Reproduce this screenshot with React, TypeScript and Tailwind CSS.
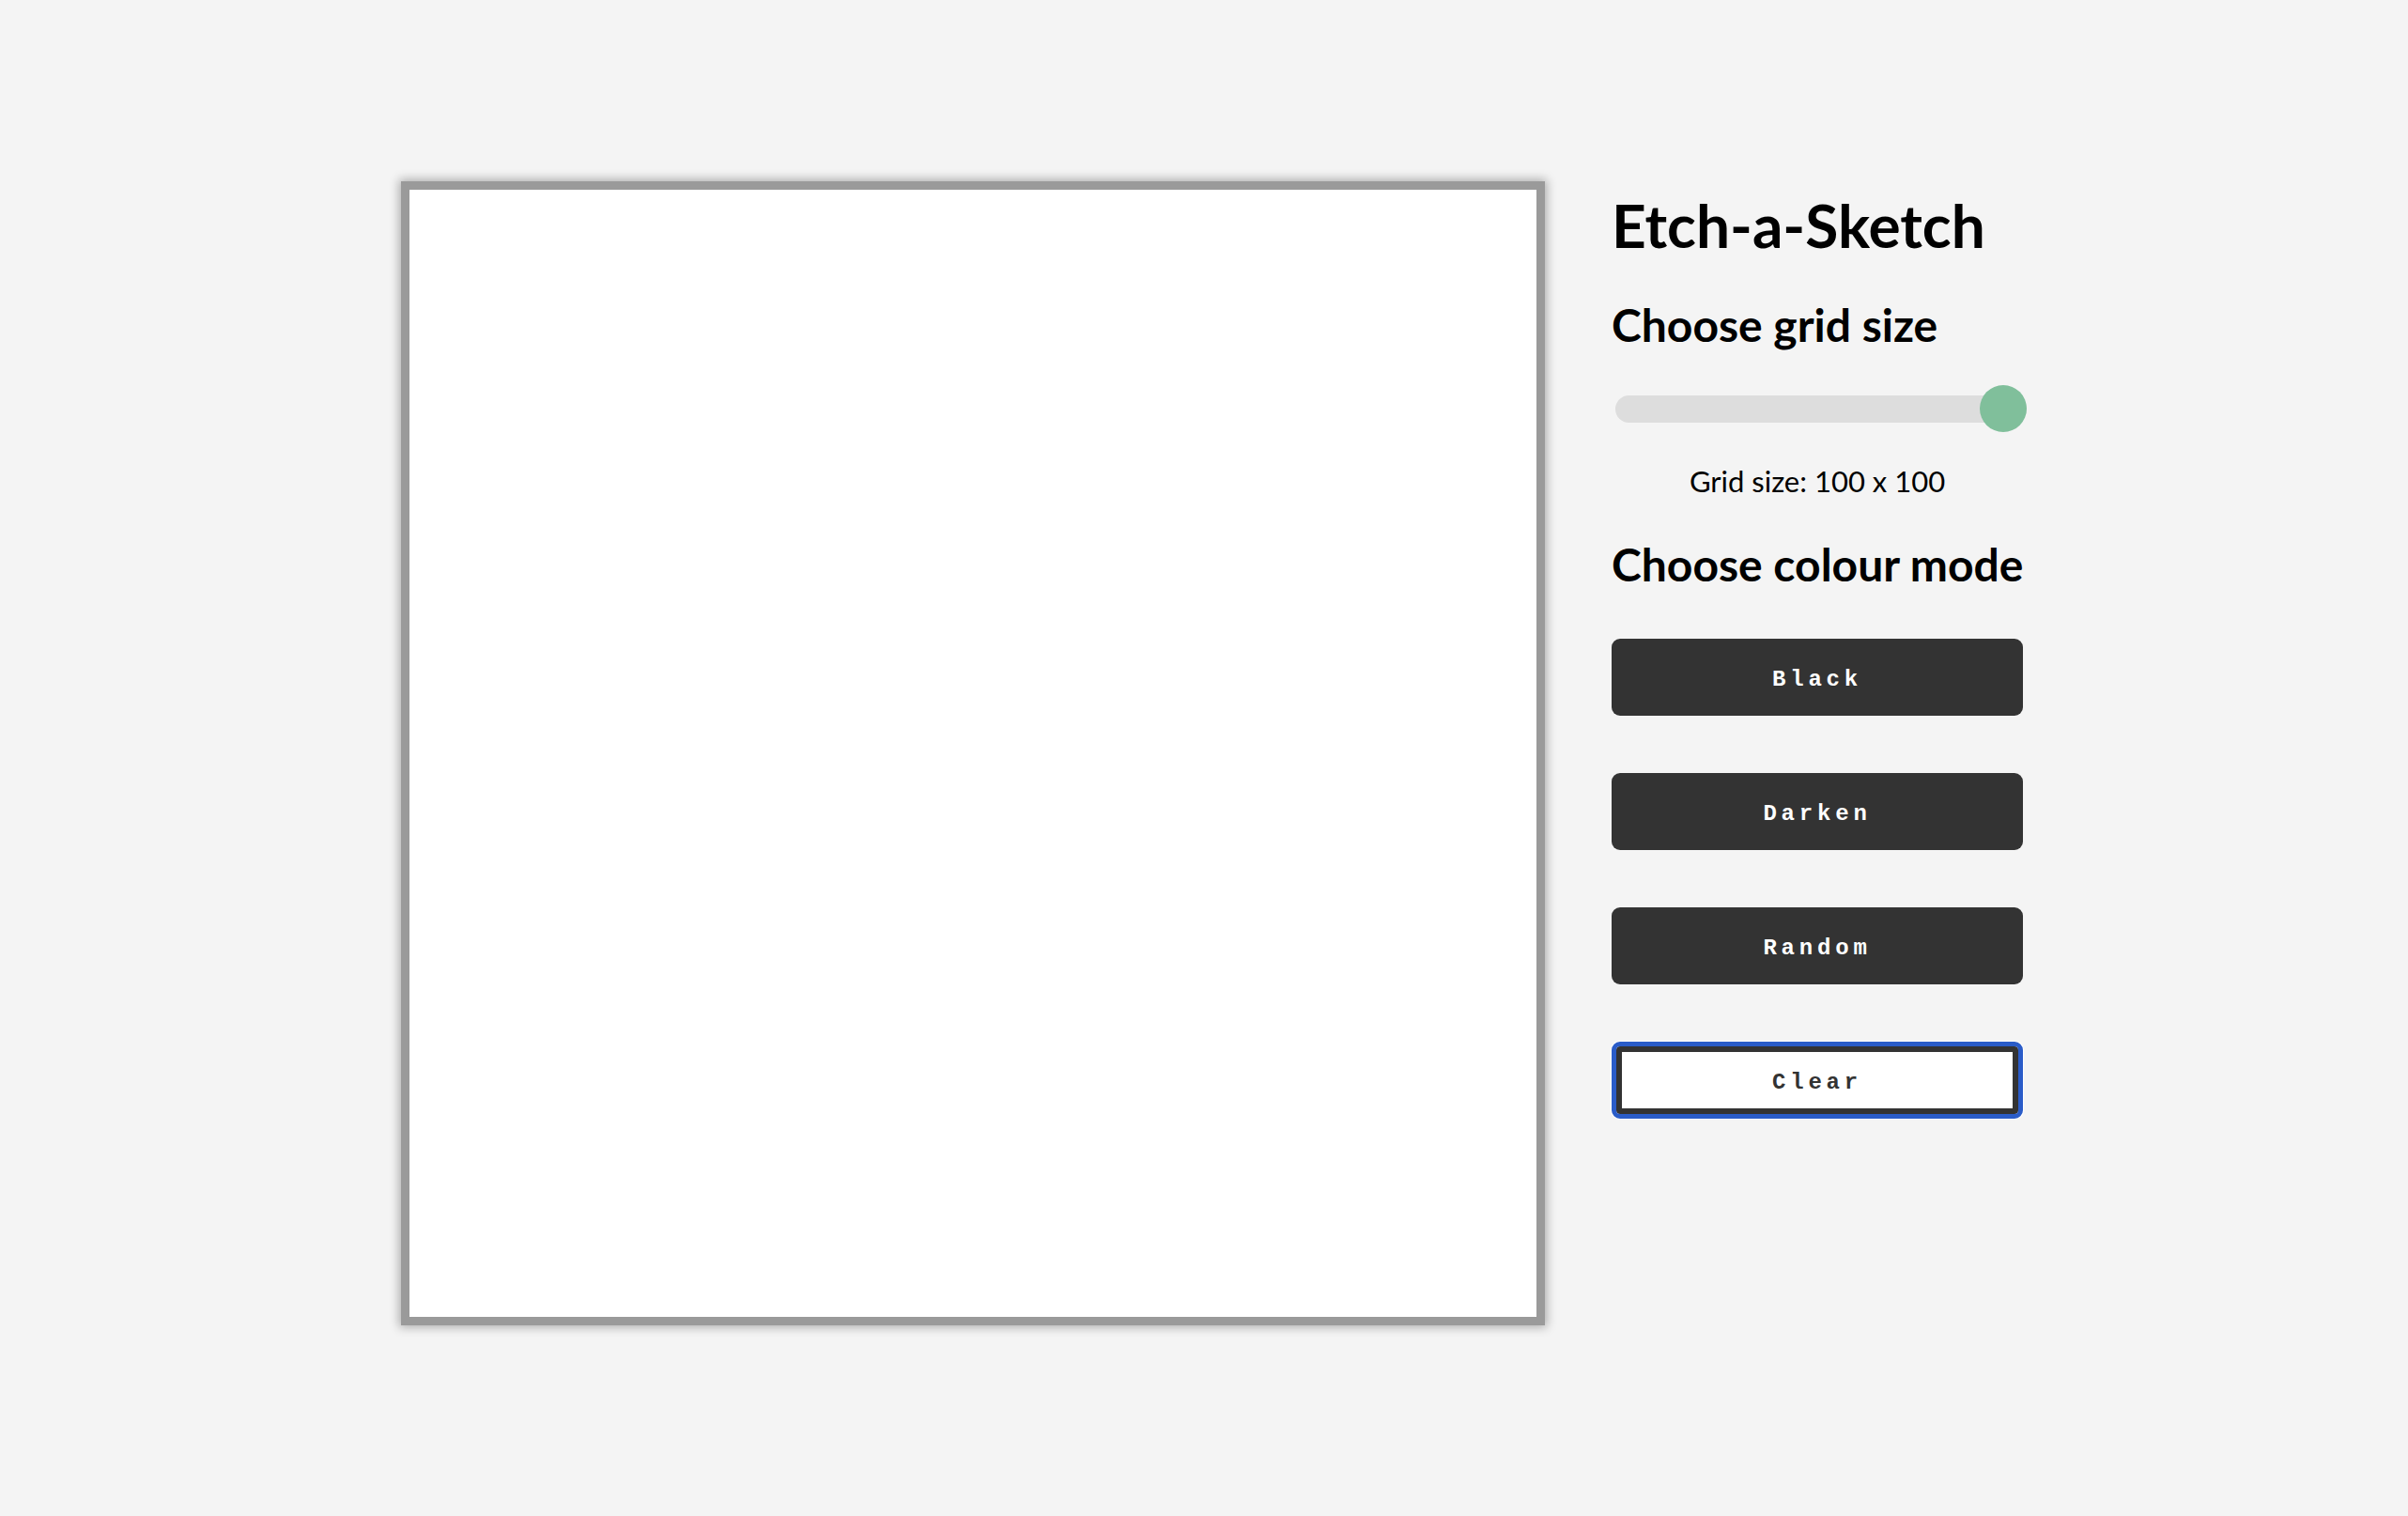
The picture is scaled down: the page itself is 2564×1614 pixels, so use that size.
const modes = ["Black", "Darken", "Random"];

export default function App() {
  return (
    <div className="min-h-screen bg-[#f4f4f4] pl-[427px] pt-[193px] font-['Lato',sans-serif] text-black">
      <div className="flex items-start gap-[71px]">
        <div className="h-[1218px] w-[1218px] border-[9px] border-[#9a9a9a] bg-white shadow-[0_0_10px_2px_rgba(0,0,0,0.3)]" />

        <div className="mt-[7px] flex w-[438px] flex-col">
          <h1 className="whitespace-nowrap text-[64px] font-bold leading-[80px]">Etch-a-Sketch</h1>
          <h2 className="mt-[37px] whitespace-nowrap text-[48px] font-bold leading-[58px]">
            Choose grid size
          </h2>

          <div className="relative mt-[35px] ml-[4px] flex h-[50px] w-[438px] items-center">
            <div className="h-[29px] w-full rounded-full bg-[#dddddd]" />
            <div className="absolute right-0 top-0 h-[50px] w-[50px] rounded-full bg-[#80bf9b]" />
          </div>

          <p className="mt-[35px] whitespace-nowrap text-center text-[31px] leading-[35px]">
            Grid size: 100 x 100
          </p>

          <h2 className="mt-[42px] whitespace-nowrap text-[48px] font-bold leading-[58px]">
            Choose colour mode
          </h2>

          <div className="mt-[50px] flex flex-col gap-[61px]">
            {modes.map((mode) => (
              <button
                key={mode}
                className="h-[82px] w-[438px] rounded-[9px] bg-[#333] pt-[5px] font-['Liberation_Mono',monospace] text-[24px] font-bold tracking-[0.2em] text-white"
              >
                {mode}
              </button>
            ))}
            <button className="h-[82px] w-[438px] rounded-[9px] border-[5px] border-[#2a5cc8] bg-white pt-[5px] font-['Liberation_Mono',monospace] text-[24px] font-bold tracking-[0.2em] text-[#333] shadow-[inset_0_0_0_6px_#333,0_0_0_1px_#fff]">
              Clear
            </button>
          </div>
        </div>
      </div>
    </div>
  );
}
